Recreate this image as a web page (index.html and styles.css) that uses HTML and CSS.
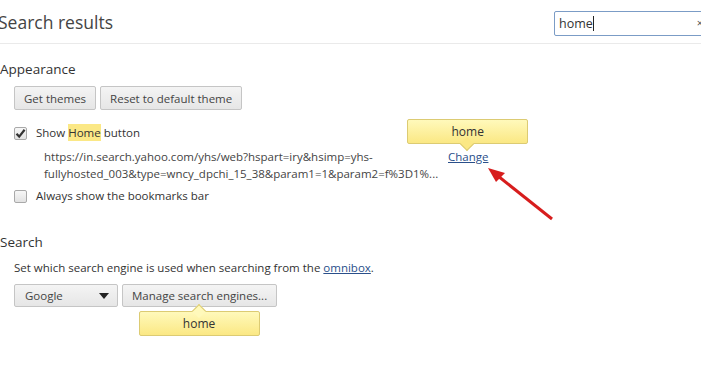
FILE: index.html
```html
<!DOCTYPE html>
<html lang="en">
<head>
<meta charset="UTF-8">
<title>Settings - Search results</title>
<link rel="stylesheet" href="styles.css">
</head>
<body>
    <div class="header">
        <h1>Search results</h1>
        <div class="search-box">
            <span class="search-text">home</span><span class="caret"></span>
            <span class="clear">×</span>
        </div>
    </div>

    <div class="section">
        <h3>Appearance</h3>
        <div class="button-row">
            <button>Get themes</button>
            <button>Reset to default theme</button>
        </div>
        <div class="check-row first">
            <span class="checkbox checked">
                <svg width="11" height="11" viewBox="0 0 11 11"><path d="M1.5 5.8 L4.2 8.6 L9.6 1.8" fill="none" stroke="#333" stroke-width="2.2"/></svg>
            </span>
            <span>Show <mark>Home</mark> button</span>
        </div>
        <div class="home-url">
            <div class="url-text">https://in.search.yahoo.com/yhs/web?hspart=iry&amp;hsimp=yhs-fullyhosted_003&amp;type=wncy_dpchi_15_38&amp;param1=1&amp;param2=f%3D1%...</div>
            <span class="bubble-anchor">
                <a href="#">Change</a>
                <span class="bubble down">home</span>
            </span>
        </div>
        <div class="check-row">
            <span class="checkbox"></span>
            <span>Always show the bookmarks bar</span>
        </div>
    </div>

    <div class="section">
        <h3 class="search-title">Search</h3>
        <p class="desc">Set which search engine is used when searching from the <a href="#">omnibox</a>.</p>
        <div class="button-row engines">
            <div class="select">Google<span class="select-arrow"></span></div>
            <span class="bubble-anchor">
                <button>Manage search engines...</button>
                <span class="bubble up">home</span>
            </span>
        </div>
    </div>

    <svg class="pointer" width="80" height="60" viewBox="0 0 80 60">
        <line x1="70" y1="55" x2="16" y2="12" stroke="#d71d1d" stroke-width="3"/>
        <polygon points="6,4 23,9 14,18" fill="#d71d1d"/>
    </svg>
</body>
</html>
```

FILE: styles.css
```css
body {
    margin: 0;
    font-family: "Open Sans", "Noto Sans", sans-serif;
    font-size: 11.5px;
    color: #333;
    background-color: #fff;
    position: relative;
    overflow: hidden;
    height: 368px;
}
.header {
    height: 43px;
    border-bottom: 1px solid #eaeaea;
    display: flex;
    align-items: center;
    justify-content: space-between;
}
h1 {
    margin: 0 0 0 -2px;
    font-size: 17.5px;
    font-weight: normal;
    color: #444;
}
.search-box {
    width: 150px;
    height: 23px;
    margin-right: -9px;
    margin-top: 4px;
    border: 1px solid #7b9cc6;
    border-radius: 2px;
    display: flex;
    align-items: center;
    padding-left: 4px;
    font-size: 12.5px;
    color: #333;
    position: relative;
}
.caret {
    width: 1px;
    height: 15px;
    background-color: #222;
}
.clear {
    position: absolute;
    right: 6px;
    top: 3px;
    font-size: 11px;
    color: #555;
}
.section {
    padding-left: 14px;
}
h3 {
    margin: 15px 0 0 -14px;
    font-size: 13.5px;
    font-weight: normal;
    line-height: 20px;
    color: #333;
}
h3.search-title {
    margin-top: 26px;
}
.button-row {
    display: flex;
    gap: 4px;
    margin-top: 7px;
}
button, .select {
    height: 24px;
    padding: 0 9px;
    font-family: inherit;
    font-size: 11.5px;
    color: #444;
    background: linear-gradient(#f4f4f4, #e6e6e6);
    border: 1px solid #c5c5c5;
    border-radius: 2px;
    box-sizing: border-box;
}
.engines {
    margin-top: 7px;
}
.engines button {
    height: 23px;
}
.select {
    width: 104px;
    height: 23px;
    display: flex;
    align-items: center;
    justify-content: space-between;
    padding: 0 8px 0 10px;
}
.select-arrow {
    width: 0;
    height: 0;
    border-left: 5px solid transparent;
    border-right: 5px solid transparent;
    border-top: 6px solid #222;
}
.check-row {
    display: flex;
    align-items: center;
    gap: 9px;
    line-height: 20px;
    margin-top: 4px;
}
.check-row.first {
    margin-top: 13px;
}
.checkbox {
    width: 13px;
    height: 13px;
    box-sizing: border-box;
    border: 1px solid #a9a9a9;
    border-radius: 2px;
    background: linear-gradient(#f7f7f7, #e2e2e2);
    display: flex;
    align-items: center;
    justify-content: center;
}
mark {
    background-color: #fbe886;
    color: #333;
    padding: 1px 0;
}
.home-url {
    display: flex;
    gap: 8px;
    margin: 5px 0 0 30px;
    line-height: 17px;
    font-size: 11.5px;
    color: #444;
}
.url-text {
    width: 396px;
}
a {
    color: #2a4f8a;
}
.desc {
    margin: 7px 0 0 0;
    line-height: 18px;
}
.bubble-anchor {
    position: relative;
}
.bubble {
    position: absolute;
    left: 50%;
    width: 121px;
    height: 25px;
    margin-left: -61px;
    box-sizing: border-box;
    background: linear-gradient(#fff9bb, #fbe884);
    border: 1px solid #dccb73;
    border-radius: 2px;
    text-align: center;
    line-height: 23px;
    font-size: 12px;
    color: #333;
}
.bubble::after {
    content: "";
    position: absolute;
    left: 54px;
    width: 9px;
    height: 9px;
    transform: rotate(45deg);
    border: 1px solid #dccb73;
}
.bubble.down {
    bottom: calc(100% + 4px);
}
.bubble.down::after {
    bottom: -6px;
    background-color: #fbe884;
    border-top: none;
    border-left: none;
}
.bubble.up {
    top: calc(100% + 4px);
}
.bubble.up::after {
    top: -6px;
    background-color: #fff9bb;
    border-bottom: none;
    border-right: none;
}
.pointer {
    position: absolute;
    left: 482px;
    top: 164px;
}
```
